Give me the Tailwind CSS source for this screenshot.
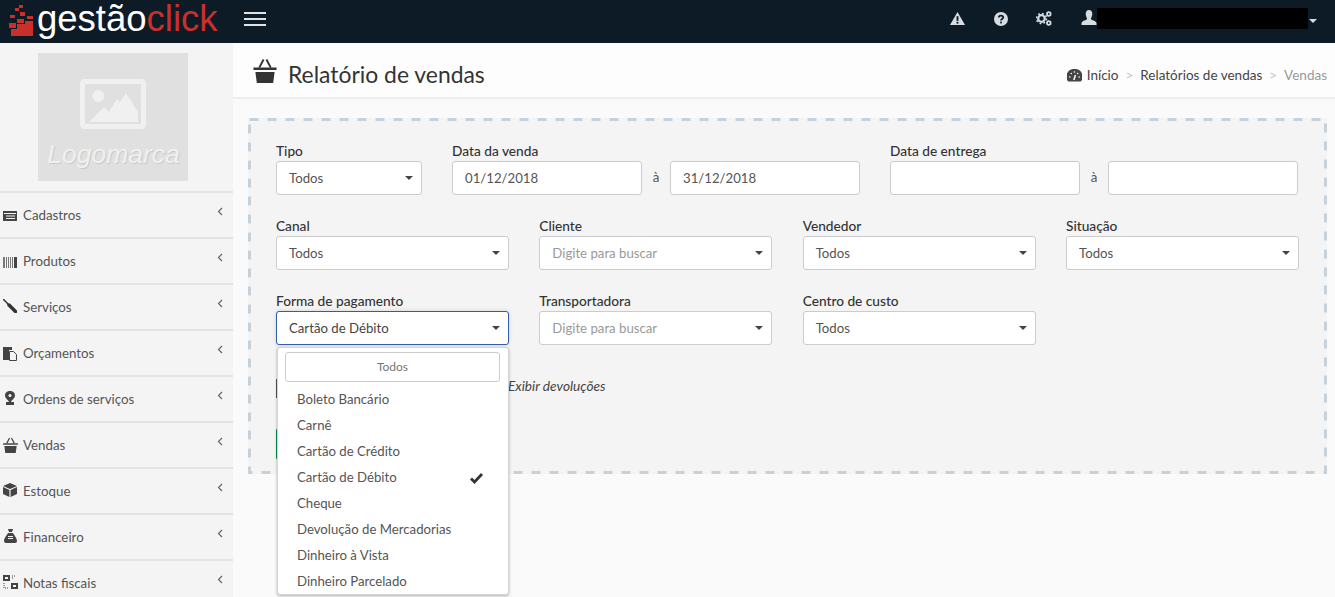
<!DOCTYPE html>
<html lang="pt">
<head>
<meta charset="utf-8">
<title>Relatório de vendas</title>
<script src="https://cdn.jsdelivr.net/npm/@tailwindcss/browser@4"></script>
</head>
<body class="m-0 h-[597px] w-[1335px] overflow-hidden bg-[#fafafa] font-['Lato','Noto_Sans',sans-serif] text-[13.3px] text-[#333]">
<header class="flex h-[43px] items-center bg-[#0d1b27] pb-[6px]">
  <div class="flex w-[233px] items-center pl-[9px]">
    <svg class="mt-[4px] h-[31px] w-[25px] shrink-0" viewBox="0 0 25 31" fill="#c9302c"><rect x="10" y="0" width="4" height="3"/><rect x="6" y="3" width="4" height="3"/><rect x="11" y="7" width="5" height="4"/><rect x="1" y="10" width="5" height="3"/><rect x="18" y="11" width="6" height="3"/><rect x="8" y="14" width="7" height="4"/><rect x="0" y="18" width="7" height="5"/><path d="M2 31V24H8V19H16V16H24V31Z"/></svg>
    <span class="ml-[3px] mt-[1px] font-['Liberation_Sans',sans-serif] text-[36.5px] leading-[36px] text-white">gestão<span class="text-[#c9302c]">click</span></span>
  </div>
  <div class="ml-[11px] flex w-[22px] flex-col gap-[4px]"><i class="block h-[2px] bg-[#dfe3e6]"></i><i class="block h-[2px] bg-[#dfe3e6]"></i><i class="block h-[2px] bg-[#dfe3e6]"></i></div>
  <div class="ml-auto flex items-center text-[#d6dde2]">
    <svg class="h-[15px] w-[15px]" viewBox="0 0 16 16"><path fill="currentColor" d="M8 1 16 15H0Z"/><rect x="7" y="5.500" width="2" height="5" fill="#0d1b27"/><rect x="7" y="11.500" width="2" height="2" fill="#0d1b27"/></svg>
    <svg class="ml-[29px] h-[14px] w-[14px]" viewBox="0 0 16 16"><circle cx="8" cy="8" r="8" fill="currentColor"/><path d="M5.500 6.200C5.500 3.600 10.500 3.600 10.500 6.200 10.500 8 8 7.800 8 9.600" fill="none" stroke="#0d1b27" stroke-width="2"/><rect x="7" y="11" width="2" height="2" fill="#0d1b27"/></svg>
    <svg class="ml-[28px] h-[15px] w-[16px]" viewBox="0 0 16 15"><circle cx="5.500" cy="7.500" r="3.300" fill="none" stroke="currentColor" stroke-width="2.200"/><circle cx="5.500" cy="7.500" r="5" fill="none" stroke="currentColor" stroke-width="1.600" stroke-dasharray="1.800 2.100"/><circle cx="12.800" cy="3" r="1.800" fill="none" stroke="currentColor" stroke-width="1.800"/><circle cx="12.800" cy="12" r="1.800" fill="none" stroke="currentColor" stroke-width="1.800"/></svg>
    <svg class="mb-[3px] ml-[29px] h-[15px] w-[16px]" viewBox="0 0 16 16" fill="currentColor"><path d="M8 0c2.500 0 3.500 2 3.500 4.500C11.500 7 10 8.500 10 9.500c0 1 6 2 6 4.500v2H0v-2c0-2.500 6-3.500 6-4.500C6 8.500 4.500 7 4.500 4.500 4.500 2 5.500 0 8 0Z"/></svg>
    <div class="mb-[1px] h-[21px] w-[211px] bg-black"></div>
    <i class="ml-[1px] mr-[18px] mt-[5px] h-0 w-0 border-x-[4px] border-t-[4px] border-x-transparent border-t-[#d6dde2]"></i>
  </div>
</header>
<div class="flex h-[554px]">
  <aside class="w-[233px] shrink-0 overflow-hidden bg-[#f4f4f4]">
    <div class="ml-[38px] mt-[10px] flex h-[128px] w-[150px] flex-col items-center bg-[#e0e0e0] pt-[26px]">
      <svg class="h-[50px] w-[67px]" viewBox="0 0 67 50"><rect x="2.500" y="2.500" width="61" height="45" rx="2" fill="none" stroke="#f0f0f0" stroke-width="5"/><circle cx="18.300" cy="17" r="6" fill="#f0f0f0"/><path d="M9 43 24 28 29 33 37 20 40 23 46 14 58 33V43Z" fill="#f0f0f0"/></svg>
      <span class="ml-[1px] mt-[10px] font-['Liberation_Sans',sans-serif] text-[26.500px] italic leading-[30px] text-[#f0f0f0] [text-shadow:1px_1px_1px_#c8c8c8]">Logomarca</span>
    </div>
    <nav class="mt-[10px]">
      <a class="flex h-[46px] items-center border-t-2 border-[#e3e3e3] pl-[3px] pr-[10px] pt-[2px] text-[#555]"><svg class="h-[14px] w-[14px]" viewBox="0 0 14 14"><path fill="#444" d="M0 2h14v10H0Z"/><path stroke="#f4f4f4" d="M1 4.500h12M3 7h9M3 9.500h9"/></svg><span class="ml-[6px] flex-1">Cadastros</span><svg class="mb-[9px] h-[9px] w-[6px]" viewBox="0 0 6 9"><path d="M5 1 1.500 4.500 5 8" fill="none" stroke="#666" stroke-width="1.200"/></svg></a>
      <a class="flex h-[46px] items-center border-t-2 border-[#e3e3e3] pl-[3px] pr-[10px] pt-[2px] text-[#555]"><svg class="h-[11px] w-[14px]" viewBox="0 0 14 11"><path fill="#777" d="M0 0h2v11H0ZM3 0h1v11H3ZM5 0h1v11H5ZM7 0h1v11H7ZM9 0h1v11H9Z"/><path fill="#444" d="M11 0h3v11h-3Z"/></svg><span class="ml-[6px] flex-1">Produtos</span><svg class="mb-[9px] h-[9px] w-[6px]" viewBox="0 0 6 9"><path d="M5 1 1.500 4.500 5 8" fill="none" stroke="#666" stroke-width="1.200"/></svg></a>
      <a class="flex h-[46px] items-center border-t-2 border-[#e3e3e3] pl-[3px] pr-[10px] pt-[2px] text-[#555]"><svg class="mb-[4px] h-[14px] w-[14px]" viewBox="0 0 14 14"><path d="M0 0 6 6" stroke="#333" stroke-width="1.500"/><path d="M6 6 12.500 12.500" stroke="#333" stroke-width="3.500" stroke-linecap="round"/></svg><span class="ml-[6px] flex-1">Serviços</span><svg class="mb-[9px] h-[9px] w-[6px]" viewBox="0 0 6 9"><path d="M5 1 1.500 4.500 5 8" fill="none" stroke="#666" stroke-width="1.200"/></svg></a>
      <a class="flex h-[46px] items-center border-t-2 border-[#e3e3e3] pl-[3px] pr-[10px] pt-[2px] text-[#555]"><svg class="h-[14px] w-[14px]" viewBox="0 0 14 14"><path fill="#444" d="M0 0h9v3H6v10H0Z"/><path fill="#f4f4f4" stroke="#444" d="M6.500 4.500h4l3 3v6h-7Z"/></svg><span class="ml-[6px] flex-1">Orçamentos</span><svg class="mb-[9px] h-[9px] w-[6px]" viewBox="0 0 6 9"><path d="M5 1 1.500 4.500 5 8" fill="none" stroke="#666" stroke-width="1.200"/></svg></a>
      <a class="flex h-[46px] items-center border-t-2 border-[#e3e3e3] pl-[3px] pr-[10px] pt-[2px] text-[#555]"><svg class="mb-[4px] h-[15px] w-[14px]" viewBox="0 0 14 15"><path fill="#444" d="M7 0c3.500 0 5 2.200 5 4.500 0 3-3.500 4.500-4 6.500h3v3H3v-3h3C5.500 9 2 7.500 2 4.500 2 2.200 3.500 0 7 0Z"/><circle cx="7" cy="4.500" r="1.500" fill="#f4f4f4"/></svg><span class="ml-[6px] flex-1">Ordens de serviços</span><svg class="mb-[9px] h-[9px] w-[6px]" viewBox="0 0 6 9"><path d="M5 1 1.500 4.500 5 8" fill="none" stroke="#666" stroke-width="1.200"/></svg></a>
      <a class="flex h-[46px] items-center border-t-2 border-[#e3e3e3] pl-[3px] pr-[10px] pt-[2px] text-[#555]"><svg class="mb-[2px] h-[16px] w-[15px]" viewBox="0 0 24 26"><path d="M6 10 10.500 1.500M18 10 13.500 1.500" fill="none" stroke="#444" stroke-width="2"/><path fill="#444" d="M0 10h24v2.500H0ZM2 14.500h20L20.500 26h-17Z"/></svg><span class="ml-[5px] flex-1">Vendas</span><svg class="mb-[9px] h-[9px] w-[6px]" viewBox="0 0 6 9"><path d="M5 1 1.500 4.500 5 8" fill="none" stroke="#666" stroke-width="1.200"/></svg></a>
      <a class="flex h-[46px] items-center border-t-2 border-[#e3e3e3] pl-[3px] pr-[10px] pt-[2px] text-[#555]"><svg class="mb-[4px] h-[14px] w-[14px]" viewBox="0 0 14 14"><path fill="#444" d="M7 0 14 3 7 6 0 3ZM0 4l6.400 3v7L0 11ZM14 4 7.600 7v7l6.400-3Z"/></svg><span class="ml-[6px] flex-1">Estoque</span><svg class="mb-[9px] h-[9px] w-[6px]" viewBox="0 0 6 9"><path d="M5 1 1.500 4.500 5 8" fill="none" stroke="#666" stroke-width="1.200"/></svg></a>
      <a class="flex h-[46px] items-center border-t-2 border-[#e3e3e3] pl-[3px] pr-[10px] pt-[2px] text-[#555]"><svg class="mb-[4px] ml-[1px] h-[14px] w-[13px]" viewBox="0 0 13 14"><path fill="#444" d="M4 0h5L8 3H5ZM4 4h5c1 2 4 5 4 8 0 1-1 2-2 2H2c-1 0-2-1-2-2 0-3 3-6 4-8Z"/><path stroke="#f4f4f4" d="M4 7.500h5M4 9.500h5"/></svg><span class="ml-[6px] flex-1">Financeiro</span><svg class="mb-[9px] h-[9px] w-[6px]" viewBox="0 0 6 9"><path d="M5 1 1.500 4.500 5 8" fill="none" stroke="#666" stroke-width="1.200"/></svg></a>
      <a class="flex h-[46px] items-center border-t-2 border-[#e3e3e3] pl-[3px] pr-[10px] pt-[2px] text-[#555]"><svg class="mb-[4px] h-[14px] w-[15px]" viewBox="0 0 15 14"><path fill="#444" d="M0 0h7v6H0ZM8 8h7v6H8Z"/><path stroke="#444" stroke-dasharray="1 1" fill="none" d="M9 1h3M9 3h2M1 8v5h5"/><rect x="2" y="2" width="3" height="2" fill="#f4f4f4"/><rect x="10" y="10" width="3" height="2" fill="#f4f4f4"/></svg><span class="ml-[5px] flex-1">Notas fiscais</span><svg class="mb-[9px] h-[9px] w-[6px]" viewBox="0 0 6 9"><path d="M5 1 1.500 4.500 5 8" fill="none" stroke="#666" stroke-width="1.200"/></svg></a>
    </nav>
  </aside>
  <main class="min-w-0 flex-1">
    <div class="flex h-[56px] items-center justify-between border-b-2 border-[#eeeeee] bg-[#fdfdfd] pl-[20px] pr-[8px] pt-[10px]">
      <div class="flex items-center">
        <svg class="mb-[9px] h-[25px] w-[24px]" viewBox="0 0 24 26"><path d="M6 10 10.500 1.500M18 10 13.500 1.500" fill="none" stroke="#333" stroke-width="2"/><path fill="#333" d="M0 10h24v2.500H0ZM2 14.500h20L20.500 26h-17Z"/></svg>
        <h1 class="mb-[2px] ml-[11px] text-[22.900px] font-normal leading-[30px] text-[#333]">Relatório de vendas</h1>
      </div>
      <div class="flex items-center text-[13.500px] text-[#444]">
        <svg class="h-[13px] w-[15px]" viewBox="0 0 15 13"><path fill="#444" d="M7.500 0a7.500 7.500 0 0 0-6.200 12.500h12.400A7.500 7.500 0 0 0 7.500 0Z"/><path stroke="#fdfdfd" stroke-width="1.500" d="M6.800 11 8.500 6"/><g fill="#fdfdfd"><circle cx="2.800" cy="8" r=".8"/><circle cx="4.300" cy="4.500" r=".8"/><circle cx="7.500" cy="3" r=".8"/><circle cx="10.700" cy="4.500" r=".8"/><circle cx="12.200" cy="8" r=".8"/></g></svg>
        <span class="ml-[5px]">Início</span><span class="mx-[7px] text-[#c4c4c4]">&gt;</span><span>Relatórios de vendas</span><span class="mx-[7px] text-[#c4c4c4]">&gt;</span><span class="text-[#999]">Vendas</span>
      </div>
    </div>
    <form class="relative ml-[15px] mt-[19px] h-[356px] w-[1079px] bg-[#f4f4f4] pl-[28px] pt-[24px]">
      <svg class="pointer-events-none absolute inset-0 h-full w-full" fill="none"><rect x="1.500" y="1.500" width="1076" height="353" stroke="#c6d1d9" stroke-width="3" stroke-dasharray="9 9"/></svg>
      <div class="flex h-[75px]">
        <div class="w-[146px] shrink-0">
          <label class="mb-[2px] block text-[13.700px] font-medium leading-[17px] text-[#333]">Tipo</label>
          <div class="flex h-[34px] items-center justify-between rounded-[3px] border border-[#ccc] bg-white pl-[12px] pr-[8px] pt-[2px] text-[13.200px] text-[#555]">Todos<i class="mb-[2px] h-0 w-0 border-x-[4px] border-t-[4px] border-x-transparent border-t-[#444]"></i></div>
        </div>
        <div class="ml-[30px] shrink-0">
          <label class="mb-[2px] block text-[13.700px] font-medium leading-[17px] text-[#333]">Data da venda</label>
          <div class="flex items-center">
            <div class="flex h-[34px] w-[190px] items-center rounded-[3px] border border-[#ccc] bg-white pl-[12px] pt-[2px] text-[13.200px] text-[#555]">01/12/2018</div>
            <span class="w-[28px] text-center text-[#555]">à</span>
            <div class="flex h-[34px] w-[190px] items-center rounded-[3px] border border-[#ccc] bg-white pl-[12px] pt-[2px] text-[13.200px] text-[#555]">31/12/2018</div>
          </div>
        </div>
        <div class="ml-[30px] shrink-0">
          <label class="mb-[2px] block text-[13.700px] font-medium leading-[17px] text-[#333]">Data de entrega</label>
          <div class="flex items-center">
            <div class="h-[34px] w-[190px] rounded-[3px] border border-[#ccc] bg-white"></div>
            <span class="w-[28px] text-center text-[#555]">à</span>
            <div class="h-[34px] w-[190px] rounded-[3px] border border-[#ccc] bg-white"></div>
          </div>
        </div>
      </div>
      <div class="grid grid-cols-[233px_233px_233px_233px] gap-x-[30.340px]">
        <div class="h-[75px]"><label class="mb-[2px] block text-[13.700px] font-medium leading-[17px]">Canal</label><div class="flex h-[34px] items-center justify-between rounded-[3px] border border-[#ccc] bg-white pl-[12px] pr-[8px] pt-[2px] text-[13.200px] text-[#555]">Todos<i class="mb-[2px] h-0 w-0 border-x-[4px] border-t-[4px] border-x-transparent border-t-[#444]"></i></div></div>
        <div class="h-[75px]"><label class="mb-[2px] block text-[13.700px] font-medium leading-[17px]">Cliente</label><div class="flex h-[34px] items-center justify-between rounded-[3px] border border-[#ccc] bg-white pl-[12px] pr-[8px] pt-[2px] text-[13.200px] text-[#999]">Digite para buscar<i class="mb-[2px] h-0 w-0 border-x-[4px] border-t-[4px] border-x-transparent border-t-[#444]"></i></div></div>
        <div class="h-[75px]"><label class="mb-[2px] block text-[13.700px] font-medium leading-[17px]">Vendedor</label><div class="flex h-[34px] items-center justify-between rounded-[3px] border border-[#ccc] bg-white pl-[12px] pr-[8px] pt-[2px] text-[13.200px] text-[#555]">Todos<i class="mb-[2px] h-0 w-0 border-x-[4px] border-t-[4px] border-x-transparent border-t-[#444]"></i></div></div>
        <div class="h-[75px]"><label class="mb-[2px] block text-[13.700px] font-medium leading-[17px]">Situação</label><div class="flex h-[34px] items-center justify-between rounded-[3px] border border-[#ccc] bg-white pl-[12px] pr-[8px] pt-[2px] text-[13.200px] text-[#555]">Todos<i class="mb-[2px] h-0 w-0 border-x-[4px] border-t-[4px] border-x-transparent border-t-[#444]"></i></div></div>
        <div class="h-[75px]"><label class="mb-[2px] block text-[13.700px] font-medium leading-[17px]">Forma de pagamento</label><div class="flex h-[34px] items-center justify-between rounded-[3px] border border-[#2f5da8] bg-white pl-[12px] pr-[8px] pt-[2px] text-[13.200px] text-[#444] shadow-[0_0_4px_rgba(0,0,0,0.15)]">Cartão de Débito<i class="mb-[2px] h-0 w-0 border-x-[4px] border-t-[4px] border-x-transparent border-t-[#444]"></i></div></div>
        <div class="h-[75px]"><label class="mb-[2px] block text-[13.700px] font-medium leading-[17px]">Transportadora</label><div class="flex h-[34px] items-center justify-between rounded-[3px] border border-[#ccc] bg-white pl-[12px] pr-[8px] pt-[2px] text-[13.200px] text-[#999]">Digite para buscar<i class="mb-[2px] h-0 w-0 border-x-[4px] border-t-[4px] border-x-transparent border-t-[#444]"></i></div></div>
        <div class="h-[75px]"><label class="mb-[2px] block text-[13.700px] font-medium leading-[17px]">Centro de custo</label><div class="flex h-[34px] items-center justify-between rounded-[3px] border border-[#ccc] bg-white pl-[12px] pr-[8px] pt-[2px] text-[13.200px] text-[#555]">Todos<i class="mb-[2px] h-0 w-0 border-x-[4px] border-t-[4px] border-x-transparent border-t-[#444]"></i></div></div>
      </div>
      <div class="mt-[12px] flex h-[19px] items-center">
        <i class="h-[19px] w-[1px] bg-[#555]"></i>
        <span class="mb-[4px] ml-[231px] text-[13.700px] italic text-[#444]">Exibir devoluções</span>
      </div>
      <div class="mt-[30px] h-[32px] w-[80px] rounded-l-[3px] bg-[#008d4c]"></div>
      <div class="absolute left-[29px] top-[229px] h-[248px] w-[232px] rounded-[3px] border border-[#d5d5d5] bg-white shadow-[0_1px_3px_rgba(0,0,0,0.3)]">
        <div class="ml-[7px] mt-[4px] flex h-[30px] w-[215px] items-center justify-center rounded-[3px] border border-[#ccc] text-[12px] text-[#777]">Todos</div>
        <ul class="mt-[5px] text-[13.200px] text-[#555]">
          <li class="flex h-[26px] items-center pl-[19px]">Boleto Bancário</li>
          <li class="flex h-[26px] items-center pl-[19px]">Carnê</li>
          <li class="flex h-[26px] items-center pl-[19px]">Cartão de Crédito</li>
          <li class="flex h-[26px] items-center justify-between pl-[19px] pr-[24px]">Cartão de Débito<svg class="h-[12px] w-[15px]" viewBox="0 0 14 12"><path d="M1.500 6.500 5 10 12.500 2" fill="none" stroke="#333" stroke-width="2.800"/></svg></li>
          <li class="flex h-[26px] items-center pl-[19px]">Cheque</li>
          <li class="flex h-[26px] items-center pl-[19px]">Devolução de Mercadorias</li>
          <li class="flex h-[26px] items-center pl-[19px]">Dinheiro à Vista</li>
          <li class="flex h-[26px] items-center pl-[19px]">Dinheiro Parcelado</li>
        </ul>
      </div>
    </form>
  </main>
</div>
</body>
</html>
